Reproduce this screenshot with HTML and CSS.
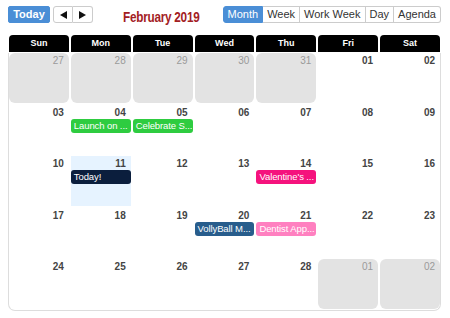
FILE: index.html
```html
<!DOCTYPE html>
<html lang="en">
<head>
<meta charset="UTF-8"/>
<title>Calendar</title>
<link rel="stylesheet" href="styles.css">
</head>
<body>
<div class="calendar">
  <div class="toolbar">
    <button class="btn btn-primary today-btn">Today</button>
    <div class="btn-group nav-group">
      <button class="btn nav-btn" aria-label="Previous">
        <svg width="7" height="8" viewBox="0 0 7 8"><path d="M7 0 L0 4 L7 8 Z" fill="#111"/></svg>
      </button>
      <button class="btn nav-btn" aria-label="Next">
        <svg width="7" height="8" viewBox="0 0 7 8"><path d="M0 0 L7 4 L0 8 Z" fill="#111"/></svg>
      </button>
    </div>
    <div class="title">February 2019</div>
    <div class="btn-group views">
      <button class="btn active">Month</button>
      <button class="btn">Week</button>
      <button class="btn">Work Week</button>
      <button class="btn">Day</button>
      <button class="btn">Agenda</button>
    </div>
  </div>

  <div class="weekdays">
    <div>Sun</div><div>Mon</div><div>Tue</div><div>Wed</div><div>Thu</div><div>Fri</div><div>Sat</div>
  </div>

  <div class="month">
    <div class="day off"><span class="num">27</span></div>
    <div class="day off"><span class="num">28</span></div>
    <div class="day off"><span class="num">29</span></div>
    <div class="day off"><span class="num">30</span></div>
    <div class="day off"><span class="num">31</span></div>
    <div class="day"><span class="num">01</span></div>
    <div class="day"><span class="num">02</span></div>

    <div class="day"><span class="num">03</span></div>
    <div class="day"><span class="num">04</span><div class="event green">Launch on ...</div></div>
    <div class="day"><span class="num">05</span><div class="event green">Celebrate S...</div></div>
    <div class="day"><span class="num">06</span></div>
    <div class="day"><span class="num">07</span></div>
    <div class="day"><span class="num">08</span></div>
    <div class="day"><span class="num">09</span></div>

    <div class="day"><span class="num">10</span></div>
    <div class="day today"><span class="num">11</span><div class="event navy">Today!</div></div>
    <div class="day"><span class="num">12</span></div>
    <div class="day"><span class="num">13</span></div>
    <div class="day"><span class="num">14</span><div class="event magenta">Valentine's ...</div></div>
    <div class="day"><span class="num">15</span></div>
    <div class="day"><span class="num">16</span></div>

    <div class="day"><span class="num">17</span></div>
    <div class="day"><span class="num">18</span></div>
    <div class="day"><span class="num">19</span></div>
    <div class="day"><span class="num">20</span><div class="event blue">VollyBall M...</div></div>
    <div class="day"><span class="num">21</span><div class="event pink">Dentist App...</div></div>
    <div class="day"><span class="num">22</span></div>
    <div class="day"><span class="num">23</span></div>

    <div class="day"><span class="num">24</span></div>
    <div class="day"><span class="num">25</span></div>
    <div class="day"><span class="num">26</span></div>
    <div class="day"><span class="num">27</span></div>
    <div class="day"><span class="num">28</span></div>
    <div class="day off"><span class="num">01</span></div>
    <div class="day off"><span class="num">02</span></div>
  </div>
</div>
</body>
</html>
```

FILE: styles.css
```css
* {
  box-sizing: border-box;
}
html, body {
  margin: 0;
  padding: 0;
  background: #fff;
  font-family: 'Liberation Sans', Arial, sans-serif;
  color: #333;
}
.calendar {
  width: 433px;
  margin: 6px 0 0 8px;
}

/* toolbar */
.toolbar {
  display: flex;
  align-items: center;
  height: 17px;
}
.btn {
  height: 17px;
  margin: 0;
  padding: 0 4px;
  font-family: 'Liberation Sans', Arial, sans-serif;
  font-size: 11px;
  line-height: 15px;
  color: #333;
  background: #fff;
  border: 1px solid #ccc;
  white-space: nowrap;
  cursor: pointer;
}
.btn-primary, .btn.active {
  background: #4a8ed6;
  border-color: #4a8ed6;
  color: #fff;
}
.today-btn {
  width: 42px;
  font-weight: bold;
  border-radius: 2px;
}
.btn-group {
  display: flex;
}
.btn-group .btn + .btn {
  border-left: none;
}
.btn-group .btn:first-child {
  border-radius: 3px 0 0 3px;
}
.btn-group .btn:last-child {
  border-radius: 0 3px 3px 0;
}
.nav-group {
  margin-left: 3px;
}
.nav-btn {
  width: 20px;
  display: flex;
  align-items: center;
  justify-content: center;
  padding: 0;
}
.title {
  margin-left: 30px;
  width: 74px;
  white-space: nowrap;
  font-family: 'Liberation Sans', Arial, sans-serif;
  font-weight: bold;
  font-size: 14px;
  letter-spacing: -0.3px;
  color: #a3201f;
  padding-top: 4px;
  transform: scaleX(0.84);
  transform-origin: left center;
}
.views {
  margin-left: auto;
}

/* weekday header */
.weekdays {
  display: grid;
  grid-template-columns: repeat(7, 1fr);
  column-gap: 2px;
  margin-top: 12px;
  padding: 0 1px;
}
.weekdays div {
  background: #000;
  color: #fff;
  font-size: 9px;
  font-weight: bold;
  text-align: center;
  height: 17px;
  line-height: 17px;
  border-radius: 4px 4px 0 0;
}

/* month grid */
.month {
  display: grid;
  grid-template-columns: repeat(7, 1fr);
  grid-auto-rows: 49.5px;
  gap: 2px;
  margin-top: 1px;
  padding: 0 0 1px;
  border: 1px solid #ddd;
  border-top: none;
  border-radius: 0 0 7px 7px;
}
.day {
  padding: 2px 5px 0 0;
  min-width: 0;
}
.num {
  display: block;
  text-align: right;
  font-size: 10px;
  line-height: 11px;
  font-weight: bold;
  color: #444;
}
.day.off {
  background: #e3e3e3;
  border-radius: 6px;
}
.day.off .num {
  color: #9a9a9a;
  font-weight: normal;
}
.day.today {
  background: #e6f3ff;
}
.event {
  margin: 1px -5px 0 0;
  height: 14px;
  line-height: 14px;
  padding-left: 3px;
  border-radius: 3px;
  font-size: 9.5px;
  letter-spacing: -0.1px;
  color: #fff;
  white-space: nowrap;
  overflow: hidden;
}
.event.green { background: #2ecc40; }
.event.navy { background: #0b1e3d; }
.event.magenta { background: #f5127d; }
.event.blue { background: #285d8c; }
.event.pink { background: #ff80c0; }
```
